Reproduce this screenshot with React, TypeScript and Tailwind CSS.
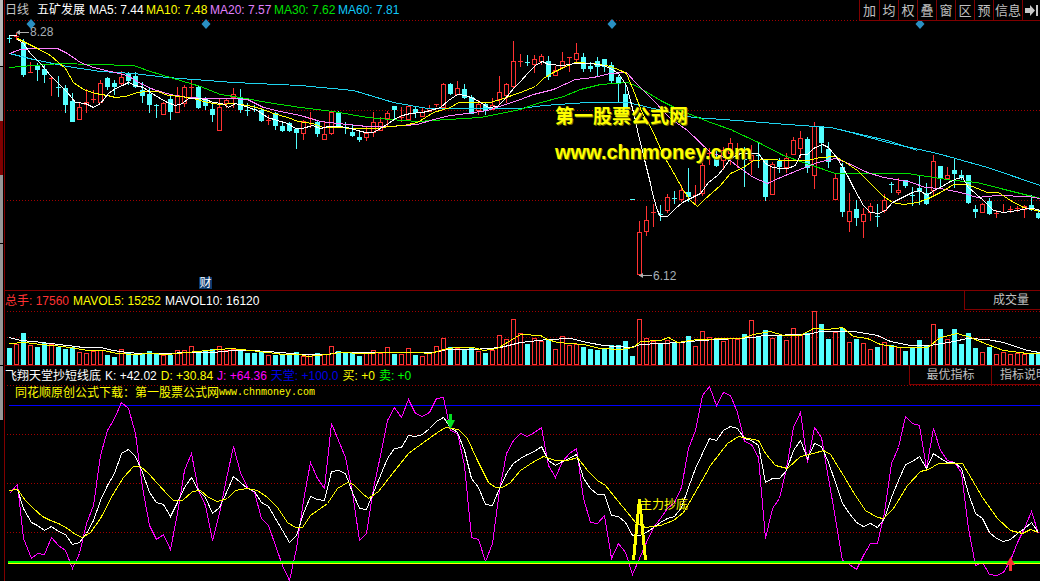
const FONT = "[font-family:'Liberation_Sans','Noto_Sans_CJK_SC',sans-serif]";

// candles: [high, bodyTop, bodyBottom, low, red?], y in 3x units of the reference
type Candle = [number, number, number, number, number];
const CANDLES_A: Candle[] = [
  [105, 115, 115, 130, 0], [100, 108, 108, 120, 1], [118, 125, 225, 232, 0], [185, 216, 218, 220, 1],
  [190, 197, 208, 243, 0], [195, 207, 224, 248, 0], [232, 233, 235, 287, 1], [228, 260, 260, 290, 0],
  [255, 265, 315, 340, 0], [280, 303, 365, 365, 0], [310, 322, 358, 358, 1], [268, 305, 310, 340, 1],
  [270, 298, 298, 310, 1], [240, 250, 308, 310, 1], [230, 234, 262, 270, 0], [240, 248, 260, 285, 0],
  [212, 232, 250, 255, 1], [215, 222, 242, 255, 0], [215, 228, 262, 265, 0], [245, 270, 287, 310, 0],
  [265, 282, 316, 340, 0], [312, 316, 316, 355, 0], [305, 310, 344, 345, 1], [285, 297, 335, 360, 0],
  [262, 284, 334, 335, 1], [255, 262, 310, 320, 1], [240, 260, 260, 290, 1], [255, 262, 325, 328, 0],
  [290, 297, 318, 330, 0], [310, 328, 347, 365, 0], [295, 322, 391, 391, 1], [295, 300, 310, 325, 1],
  [265, 282, 292, 325, 1], [268, 295, 330, 338, 0], [308, 329, 329, 348, 0], [315, 327, 327, 335, 0],
  [325, 330, 363, 365, 0], [345, 359, 359, 375, 1], [335, 340, 378, 390, 0], [365, 378, 393, 395, 0],
  [365, 370, 395, 397, 0], [385, 387, 398, 447, 0], [360, 362, 398, 420, 1], [335, 355, 355, 385, 1],
  [360, 365, 402, 412, 0], [365, 403, 418, 418, 1], [335, 337, 401, 405, 1], [332, 335, 378, 385, 0],
  [365, 380, 380, 402, 0], [375, 397, 410, 412, 0], [395, 412, 420, 425, 0], [380, 398, 410, 422, 1],
  [337, 367, 397, 410, 1], [350, 365, 388, 390, 1], [332, 340, 354, 380, 1], [319, 319, 331, 360, 0],
  [322, 350, 350, 365, 1], [315, 318, 356, 360, 1], [320, 327, 338, 355, 0], [320, 335, 347, 350, 1],
  [315, 323, 333, 335, 1], [312, 313, 313, 322, 1], [250, 252, 322, 325, 1], [250, 252, 282, 284, 0],
  [243, 265, 282, 285, 1], [252, 268, 295, 298, 0], [285, 290, 340, 342, 0], [300, 313, 332, 345, 1],
  [305, 312, 332, 345, 0], [295, 315, 327, 330, 1], [228, 277, 297, 315, 1], [250, 253, 285, 310, 1],
  [123, 184, 260, 265, 1], [162, 184, 184, 200, 1], [165, 185, 185, 198, 0], [165, 178, 194, 220, 1],
  [163, 169, 184, 195, 1], [168, 183, 232, 240, 0], [198, 210, 225, 228, 1], [156, 182, 200, 205, 1],
  [172, 172, 172, 215, 1], [130, 160, 178, 185, 1], [160, 172, 207, 216, 0], [185, 198, 207, 215, 0],
  [170, 183, 200, 230, 0], [177, 177, 200, 215, 0], [185, 195, 243, 248, 0], [225, 232, 254, 308, 0],
  [250, 282, 345, 350, 0],
];
// from candle 89 on, y is measured from y=130 of the reference
const CANDLES_B: Candle[] = [
  [208, 208, 208, 208, 0], [273, 306, 433, 433, 1], [228, 271, 304, 318, 1], [222, 245, 245, 292, 1],
  [225, 252, 252, 272, 0], [192, 202, 242, 250, 1], [183, 204, 204, 222, 0], [165, 180, 206, 215, 1],
  [114, 186, 200, 215, 0], [165, 195, 195, 225, 1], [100, 105, 188, 197, 1], [55, 70, 70, 105, 1],
  [60, 87, 108, 110, 0], [50, 60, 90, 120, 1], [25, 40, 70, 105, 1], [40, 70, 70, 115, 1],
  [50, 87, 87, 172, 0], [45, 75, 90, 135, 1], [35, 75, 75, 115, 0], [88, 88, 202, 213, 0],
  [95, 103, 194, 195, 1], [85, 92, 110, 130, 0], [70, 84, 110, 130, 1], [20, 30, 73, 75, 1],
  [3, 25, 55, 85, 1], [20, 28, 115, 130, 0], [-24, -12, 136, 178, 1], [-12, -12, 40, 68, 0],
  [37, 57, 95, 115, 0], [133, 145, 208, 210, 1], [100, 112, 248, 260, 0], [190, 243, 272, 305, 1],
  [210, 237, 263, 288, 0], [235, 253, 274, 325, 1], [220, 229, 248, 272, 1], [222, 258, 258, 290, 0],
  [193, 210, 240, 250, 1], [155, 163, 163, 188, 0], [143, 181, 187, 195, 1], [150, 150, 167, 173, 0],
  [170, 195, 195, 227, 0], [138, 175, 187, 225, 0], [160, 190, 222, 225, 0], [75, 94, 180, 195, 1],
  [108, 108, 145, 175, 0], [112, 136, 144, 145, 1], [85, 120, 132, 175, 0], [120, 136, 144, 150, 0],
  [135, 135, 220, 222, 0], [225, 237, 245, 263, 0], [220, 222, 245, 247, 1], [205, 212, 252, 255, 0],
  [240, 250, 250, 263, 1], [222, 245, 245, 250, 1], [228, 236, 236, 248, 1], [227, 235, 235, 247, 1],
  [225, 228, 238, 263, 1], [195, 225, 240, 242, 0], [238, 248, 262, 268, 0],
];
const ALL_CANDLES = [...CANDLES_A, ...CANDLES_B];

// volume bars: top y in 3x units from y=270, colour follows the candle
const VOL_TOPS = [234, 222, 190, 225, 232, 220, 222, 230, 237, 232, 247, 250, 242, 240, 255, 261, 236, 247, 252, 250, 244, 250, 256, 254, 240, 240, 229, 243, 243, 238, 229, 241, 237, 238, 248, 248, 243, 255, 255, 254, 252, 247, 258, 251, 250, 253, 229, 243, 246, 250, 258, 247, 241, 250, 232, 251, 252, 235, 255, 259, 250, 229, 205, 232, 233, 236, 235, 243, 249, 240, 196, 208, 148, 190, 222, 205, 212, 208, 238, 199, 226, 222, 230, 237, 240, 236, 226, 226, 213, 258, 148, 205, 214, 220, 211, 219, 217, 198, 229, 184, 202, 210, 213, 205, 206, 192, 151, 197, 180, 203, 194, 211, 175, 191, 190, 124, 162, 207, 186, 174, 217, 207, 220, 238, 231, 217, 226, 232, 243, 233, 210, 224, 163, 177, 207, 177, 222, 190, 234, 247, 231, 253, 247, 253, 250, 252, 251, 247];

const ma5 = [[50, 118], [70, 130], [90, 160], [120, 190], [150, 225], [175, 250], [200, 275], [225, 305], [255, 308], [280, 322], [300, 310], [325, 280], [345, 265], [365, 255], [385, 247], [405, 255], [430, 262], [450, 275], [475, 290], [500, 305], [525, 315], [545, 310], [565, 295], [590, 295], [615, 298], [640, 305], [665, 310], [685, 322], [705, 310], [725, 315], [745, 320], [770, 330], [800, 350], [830, 360], [860, 370], [885, 385], [905, 385], [935, 375], [960, 385], [985, 378], [1010, 378], [1040, 380], [1070, 390], [1095, 395], [1120, 395], [1140, 385], [1165, 370], [1185, 355], [1205, 345], [1230, 338], [1265, 335], [1290, 330], [1320, 320], [1345, 300], [1370, 283], [1395, 285], [1420, 295], [1440, 305], [1465, 320], [1490, 318], [1515, 295], [1540, 265], [1560, 243], [1580, 220], [1605, 195], [1625, 183], [1645, 193], [1687, 195], [1725, 190], [1770, 190], [1810, 195], [1830, 205], [1855, 220], [1878, 255], [1890, 300], [1905, 360], [1910, 390]];
const ma5b = [[350, 0], [375, 100], [390, 160], [400, 200], [412, 240], [420, 257], [440, 257], [465, 235], [485, 215], [510, 205], [540, 190], [565, 155], [590, 135], [610, 115], [630, 85], [660, 70], [695, 68], [715, 70], [735, 100], [755, 112], [780, 115], [800, 115], [825, 105], [840, 72], [860, 72], [880, 55], [905, 42], [925, 50], [950, 85], [985, 140], [1000, 170], [1030, 225], [1050, 245], [1075, 250], [1095, 240], [1115, 215], [1140, 205], [1175, 185], [1198, 180], [1222, 195], [1240, 180], [1260, 170], [1285, 155], [1310, 145], [1325, 142], [1345, 170], [1390, 210], [1420, 240], [1450, 245], [1490, 240], [1520, 235], [1540, 235], [1560, 240]];
const ma10 = [[50, 115], [80, 128], [110, 145], [150, 165], [175, 185], [195, 205], [220, 245], [250, 268], [285, 278], [320, 285], [345, 290], [375, 288], [410, 277], [440, 272], [470, 272], [505, 285], [540, 287], [580, 295], [620, 305], [660, 312], [700, 310], [740, 315], [780, 325], [820, 340], [860, 350], [895, 362], [935, 370], [970, 380], [1010, 380], [1060, 385], [1130, 385], [1165, 378], [1210, 374], [1250, 365], [1300, 335], [1350, 322], [1375, 307], [1420, 307], [1470, 305], [1510, 295], [1560, 277], [1605, 258], [1630, 235], [1660, 215], [1690, 200], [1725, 187], [1780, 188], [1830, 198], [1860, 210], [1878, 218], [1900, 270], [1925, 340], [1955, 390]];
const ma10b = [[395, 0], [430, 75], [460, 125], [490, 180], [510, 210], [530, 227], [550, 210], [575, 185], [600, 165], [630, 130], [670, 110], [700, 90], [740, 88], [800, 90], [860, 90], [900, 80], [945, 78], [975, 95], [1010, 120], [1050, 160], [1085, 195], [1115, 215], [1150, 223], [1190, 215], [1225, 205], [1260, 185], [1300, 163], [1340, 163], [1400, 185], [1435, 185], [1470, 210], [1510, 230], [1560, 242]];
const ma20 = [[28, 160], [60, 147], [100, 145], [170, 145], [200, 160], [240, 185], [280, 200], [330, 212], [380, 225], [420, 250], [460, 268], [510, 283], [560, 290], [620, 293], [680, 293], [740, 298], [790, 320], [840, 332], [900, 345], [960, 362], [1040, 372], [1100, 378], [1170, 378], [1250, 372], [1300, 358], [1350, 345], [1400, 338], [1460, 330], [1560, 297], [1600, 283], [1660, 268], [1725, 238], [1780, 232], [1830, 220], [1878, 215], [1905, 245], [1960, 300], [2010, 355], [2060, 390]];
const ma20b = [[500, 0], [570, 65], [620, 85], [660, 115], [700, 140], [740, 158], [780, 140], [830, 120], [890, 95], [945, 85], [985, 100], [1040, 125], [1090, 142], [1165, 152], [1215, 170], [1260, 175], [1320, 185], [1370, 200], [1430, 195], [1520, 197], [1560, 205]];
const ma30 = [[28, 202], [100, 195], [180, 188], [280, 192], [400, 194], [450, 212], [520, 235], [600, 258], [660, 282], [720, 290], [800, 305], [900, 320], [1000, 333], [1100, 350], [1170, 358], [1250, 362], [1340, 357], [1440, 350], [1560, 327], [1610, 310], [1690, 288], [1740, 268], [1800, 252], [1880, 245], [1910, 258], [1980, 300], [2040, 330], [2130, 365], [2200, 390]];
const ma30b = [[635, 0], [715, 35], [790, 75], [850, 95], [945, 130], [1160, 130], [1300, 150], [1370, 155], [1440, 175], [1500, 190], [1560, 205]];
const ma60 = [[28, 160], [100, 178], [200, 198], [300, 212], [400, 218], [500, 230], [700, 245], [900, 255], [1060, 270], [1180, 305], [1280, 325], [1440, 325], [1560, 325], [1630, 315], [1760, 305], [1880, 305], [1960, 325], [2080, 352], [2210, 360], [2360, 372], [2490, 380], [2660, 420], [2750, 450]];
const ma60b = [[970, 0], [1100, 35], [1250, 70], [1400, 110], [1560, 165]];

const vol10 = [[28, 202], [60, 210], [100, 213], [150, 220], [200, 225], [250, 230], [300, 232], [340, 240], [380, 247], [420, 250], [500, 250], [560, 247], [640, 245], [700, 240], [760, 240], [840, 245], [900, 252], [980, 252], [1010, 245], [1100, 247], [1220, 245], [1300, 247], [1340, 237], [1420, 238], [1500, 232], [1560, 217], [1640, 207], [1710, 205], [1760, 215], [1810, 225], [1890, 232], [1920, 223], [1980, 220], [2040, 215], [2100, 210], [2210, 205], [2260, 200], [2290, 195], [2420, 193], [2460, 183], [2560, 183], [2630, 195], [2670, 212], [2730, 225], [2790, 225], [2860, 212], [2900, 205], [2960, 206], [3010, 217], [3080, 240], [3120, 245]];
const vol5 = [[28, 218], [75, 217], [120, 222], [160, 225], [210, 232], [260, 240], [310, 240], [350, 248], [400, 253], [450, 250], [500, 252], [560, 245], [620, 241], [690, 235], [750, 240], [800, 245], [850, 253], [900, 253], [920, 258], [980, 252], [1020, 246], [1090, 248], [1160, 245], [1250, 245], [1290, 250], [1340, 235], [1370, 230], [1420, 230], [1450, 240], [1490, 235], [1530, 210], [1560, 192], [1620, 196], [1640, 207], [1670, 215], [1750, 222], [1800, 235], [1860, 236], [1900, 230], [1920, 213], [1980, 210], [2005, 200], [2030, 215], [2090, 207], [2190, 204], [2220, 205], [2260, 192], [2310, 184], [2350, 195], [2400, 195], [2440, 175], [2480, 176], [2525, 170], [2560, 198], [2600, 205], [2640, 222], [2700, 232], [2780, 230], [2820, 200], [2870, 190], [2910, 200], [2960, 222], [3010, 240], [3080, 248], [3120, 250]];

const kJ = [[28, 325], [50, 298], [70, 460], [92, 520], [112, 505], [133, 508], [154, 455], [175, 480], [196, 495], [217, 548], [238, 505], [259, 415], [280, 360], [301, 210], [322, 135], [343, 100], [364, 52], [385, 70], [406, 145], [427, 305], [448, 420], [469, 463], [490, 448], [511, 493], [532, 385], [553, 255], [574, 203], [595, 315], [616, 360], [637, 465], [658, 385], [679, 280], [700, 182], [721, 260], [742, 305], [763, 320], [784, 400], [805, 420], [826, 480], [847, 540], [868, 585], [889, 490], [910, 345], [931, 230], [952, 280], [973, 310], [994, 113], [1015, 165], [1036, 215], [1057, 320], [1078, 465], [1099, 445], [1120, 310], [1141, 210], [1162, 105], [1183, 65], [1204, 97], [1225, 42], [1246, 85], [1267, 92], [1288, 80], [1309, 40], [1330, 35], [1351, 135], [1372, 145], [1393, 240], [1414, 455], [1435, 462], [1456, 527], [1477, 475], [1498, 315], [1519, 205], [1540, 165], [1560, 145], [1581, 152], [1602, 142], [1623, 125], [1644, 240], [1665, 275], [1686, 228], [1707, 205], [1728, 190], [1749, 340], [1770, 410], [1791, 415], [1812, 390], [1833, 518], [1854, 475], [1875, 500], [1896, 568], [1917, 520], [1938, 470], [1959, 425], [1980, 400], [2001, 370], [2022, 350], [2043, 305], [2064, 190], [2085, 135], [2106, 30], [2127, 3], [2148, 60], [2169, 20], [2190, 30], [2211, 80], [2232, 168], [2253, 178], [2274, 215], [2295, 458], [2316, 370], [2337, 340], [2358, 250], [2379, 125], [2400, 80], [2421, 230], [2442, 125], [2463, 155], [2484, 280], [2505, 400], [2526, 525], [2547, 538], [2568, 552], [2589, 510], [2610, 473], [2631, 475], [2652, 380], [2673, 235], [2694, 185], [2715, 92], [2736, 115], [2757, 120], [2778, 250], [2799, 130], [2820, 195], [2841, 225], [2862, 230], [2883, 260], [2904, 430], [2925, 540], [2946, 530], [2967, 568], [2988, 570], [3009, 560], [3030, 525], [3051, 470], [3072, 430], [3093, 378], [3114, 445]];
const kK = [[28, 315], [50, 312], [70, 370], [92, 410], [112, 420], [133, 435], [154, 422], [175, 438], [196, 448], [217, 478], [238, 470], [259, 445], [280, 405], [301, 345], [322, 300], [343, 265], [364, 205], [385, 193], [406, 212], [427, 260], [448, 320], [469, 350], [490, 358], [511, 393], [532, 350], [553, 305], [574, 277], [595, 315], [616, 335], [637, 385], [658, 365], [679, 320], [700, 272], [721, 290], [742, 308], [763, 318], [784, 350], [805, 362], [826, 400], [847, 435], [868, 472], [889, 450], [910, 385], [931, 333], [952, 343], [973, 346], [994, 258], [1015, 256], [1036, 265], [1057, 320], [1078, 370], [1099, 373], [1120, 320], [1141, 270], [1162, 220], [1183, 190], [1204, 185], [1225, 150], [1246, 153], [1267, 148], [1288, 130], [1309, 108], [1330, 97], [1351, 125], [1372, 140], [1393, 195], [1414, 280], [1435, 305], [1456, 358], [1477, 360], [1498, 310], [1519, 265], [1540, 235], [1560, 220], [1581, 208], [1602, 197], [1623, 183], [1644, 225], [1665, 240], [1686, 228], [1707, 218], [1728, 208], [1749, 280], [1770, 310], [1791, 328], [1812, 328], [1833, 390], [1854, 392], [1875, 412], [1896, 450], [1917, 450], [1938, 440], [1959, 425], [1980, 412], [2001, 400], [2022, 392], [2043, 365], [2064, 305], [2085, 250], [2106, 205], [2127, 160], [2148, 165], [2169, 135], [2190, 122], [2211, 130], [2232, 160], [2253, 165], [2274, 180], [2295, 292], [2316, 280], [2337, 280], [2358, 255], [2379, 195], [2400, 165], [2421, 220], [2442, 175], [2463, 182], [2484, 232], [2505, 290], [2526, 355], [2547, 385], [2568, 412], [2589, 422], [2610, 415], [2631, 425], [2652, 400], [2673, 335], [2694, 285], [2715, 238], [2736, 228], [2757, 213], [2778, 250], [2799, 203], [2820, 218], [2841, 230], [2862, 232], [2883, 250], [2904, 325], [2925, 385], [2946, 400], [2967, 440], [2988, 460], [3009, 467], [3030, 462], [3051, 445], [3072, 428], [3093, 410], [3114, 440]];
const kD = [[28, 315], [50, 312], [75, 345], [100, 370], [125, 392], [150, 405], [175, 415], [200, 428], [225, 447], [245, 455], [270, 440], [300, 400], [340, 325], [370, 275], [400, 243], [420, 242], [445, 265], [470, 295], [500, 328], [520, 345], [545, 345], [575, 318], [600, 315], [625, 335], [650, 348], [680, 340], [705, 315], [740, 310], [770, 315], [800, 335], [830, 365], [860, 410], [885, 425], [905, 425], [930, 390], [960, 370], [980, 355], [1010, 310], [1040, 290], [1060, 298], [1085, 325], [1105, 338], [1135, 318], [1175, 265], [1225, 205], [1270, 170], [1310, 140], [1335, 127], [1375, 133], [1400, 160], [1430, 225], [1465, 290], [1485, 305], [1505, 307], [1530, 290], [1560, 255], [1595, 230], [1630, 213], [1665, 225], [1700, 225], [1730, 215], [1760, 255], [1790, 285], [1815, 300], [1850, 345], [1880, 380], [1905, 410], [1935, 425], [1980, 420], [2020, 405], [2050, 380], [2080, 330], [2130, 240], [2180, 175], [2215, 153], [2275, 165], [2295, 205], [2325, 240], [2360, 250], [2400, 212], [2440, 205], [2470, 195], [2490, 208], [2530, 270], [2565, 330], [2595, 375], [2630, 395], [2650, 400], [2680, 370], [2720, 300], [2760, 258], [2785, 252], [2815, 235], [2885, 235], [2905, 265], [2945, 335], [2990, 400], [3030, 435], [3065, 443], [3090, 432], [3114, 440]];

// snap to pixel centres so the 1px lines stay thin
const pts = (list: number[][], dx: number, dy: number) =>
  list.map((p) => `${Math.round(dx + p[0] / 3) + 0.5},${Math.round(dy + p[1] / 3) + 0.5}`).join(" ");

function Line({ list, dx = 0, dy = 0, color }: { list: number[][]; dx?: number; dy?: number; color: string }) {
  return <polyline points={pts(list, dx, dy)} fill="none" stroke={color} strokeWidth="1" shapeRendering="crispEdges" />;
}

function Dots({ y }: { y: number }) {
  return <line x1="7" x2="1040" y1={y + 0.5} y2={y + 0.5} stroke="#a00000" strokeDasharray="1 2" shapeRendering="crispEdges" />;
}

function Diamond({ x }: { x: number }) {
  return <polygon points={`${x},19 ${x + 4.5},24 ${x},29 ${x - 4.5},24`} fill="#2a8fc2" />;
}

function CandleBar({ c, i, dy }: { c: Candle; i: number; dy: number }) {
  const [hi, top, bot, lo, red] = c;
  const x = 7 + 7 * i;
  const color = red ? "#ff3232" : "#54ffff";
  const yTop = Math.round(dy + top / 3);
  const h = Math.round((bot - top) / 3);
  return (
    <g shapeRendering="crispEdges">
      <line x1={x + 2.5} x2={x + 2.5} y1={dy + hi / 3} y2={dy + lo / 3} stroke={color} />
      {h <= 1 ? (
        <rect x={x} y={yTop} width="5" height="1" fill={color} />
      ) : red ? (
        <rect x={x + 0.5} y={yTop + 0.5} width="4" height={h} fill="#000" stroke={color} />
      ) : (
        <rect x={x} y={yTop} width="5" height={h} fill={color} />
      )}
    </g>
  );
}

function MainChart() {
  return (
    <svg className="block w-[1035px] h-[290px]" viewBox="5 0 1035 290">
      <Dots y={20} />
      <Dots y={110} />
      <Dots y={200} />
      {[31, 206, 612, 920].map((x) => (
        <Diamond key={x} x={x} />
      ))}
      {CANDLES_A.map((c, i) => (
        <CandleBar key={i} c={c} i={i} dy={0} />
      ))}
      {CANDLES_B.map((c, i) => (
        <CandleBar key={i} c={c} i={i + 89} dy={130} />
      ))}
      <Line list={ma60} color="#1fd4f0" />
      <Line list={ma60b} dx={520} dy={130} color="#1fd4f0" />
      <Line list={ma30} color="#00e000" />
      <Line list={ma30b} dx={520} dy={130} color="#00e000" />
      <Line list={ma20} color="#ff80ff" />
      <Line list={ma20b} dx={520} dy={130} color="#ff80ff" />
      <Line list={ma10} color="#ffff00" />
      <Line list={ma10b} dx={520} dy={130} color="#ffff00" />
      <Line list={ma5} color="#ffffff" />
      <Line list={ma5b} dx={520} dy={130} color="#ffffff" />
      {/* high and low price markers */}
      <g stroke="#b0b0b0" shapeRendering="crispEdges">
        <line x1="17" x2="29" y1="32.5" y2="32.5" />
        <line x1="639" x2="652" y1="275.5" y2="275.5" />
      </g>
      <rect x="9" y="35" width="8" height="1" fill="#ffffff" />
      <polygon points="16,32.5 20,30 20,35" fill="#b0b0b0" />
      <polygon points="639,275.5 643,273 643,278" fill="#b0b0b0" />
    </svg>
  );
}

function VolumeChart() {
  return (
    <svg className="block w-[1035px] h-[74px]" viewBox="5 291 1035 74">
      <Dots y={311} />
      <Dots y={337} />
      {VOL_TOPS.map((t, i) => {
        const x = 7 + 7 * i;
        const y = Math.round(270 + t / 3);
        return ALL_CANDLES[i][4] ? (
          <rect key={i} x={x + 0.5} y={y + 0.5} width="4" height={364 - y} fill="#000" stroke="#ff3232" shapeRendering="crispEdges" />
        ) : (
          <rect key={i} x={x} y={y} width="5" height={365 - y} fill="#54ffff" shapeRendering="crispEdges" />
        );
      })}
      <Line list={vol10} dy={270} color="#ffffff" />
      <Line list={vol5} dy={270} color="#ffff00" />
    </svg>
  );
}

function KdjChart() {
  return (
    <svg className="block w-[1035px] h-[215px]" viewBox="5 366 1035 215">
      <Dots y={385} />
      <Dots y={434} />
      <Dots y={483} />
      <Dots y={532} />
      <rect x="9" y="405" width="1031" height="1" fill="#0000ff" />
      <Line list={kJ} dy={385} color="#ff00ff" />
      <Line list={kK} dy={385} color="#ffffff" />
      <Line list={kD} dy={385} color="#ffff00" />
      <rect x="8" y="561" width="1032" height="2" fill="#00ff00" />
      <rect x="8" y="563" width="1032" height="1" fill="#ffff00" />
      <polyline points="633.5,560 639.5,499 645.5,560" fill="none" stroke="#ffff00" strokeWidth="3" shapeRendering="crispEdges" />
      {/* sell and buy arrows */}
      <polygon points="449,414 452,414 452,420 455,420 450.5,429 446,420 449,420" fill="#00e020" />
      <polygon points="1010.5,557 1015,565 1012,565 1012,571 1009,571 1009,565 1006,565" fill="#ff3232" />
    </svg>
  );
}

function ToolButton({ label, width }: { label: string; width: string }) {
  return (
    <div className={`${width} flex items-center justify-center border-l border-[#800000] text-[13px] text-[#c0c0c0]`}>{label}</div>
  );
}

export default function App() {
  return (
    <div className={`${FONT} flex w-[1040px] h-[581px] overflow-hidden bg-black text-xs leading-none`}>
      {/* left scroll strip */}
      <div className="w-[5px] h-full shrink-0 border-r border-[#800000] flex flex-col">
        <div className="w-[3px] h-[66px] bg-[#b8b8b8]" />
        <div className="w-[3px] h-[54px] mt-px bg-[#969696]" />
        <div className="w-[3px] h-[54px] bg-[#800000]" />
        <div className="w-[3px] h-[68px] bg-[#969696]" />
        <div className="w-[3px] h-[121px] mt-px bg-[#969696]" />
        <div className="w-[3px] h-[54px] mt-px bg-[#969696]" />
      </div>

      <div className="flex-1 flex flex-col min-w-0">
        <div className="relative h-[291px] border-b border-[#800000]">
          <MainChart />
          <div className="absolute left-0 top-0 h-5 flex items-center whitespace-nowrap">
            <span className="text-[#c4c4c4] w-[32px]">日线</span>
            <span className="text-white w-[52px]">五矿发展</span>
            <span className="text-white w-[57px]">MA5: 7.44</span>
            <span className="text-[#ffff00] w-[64px]">MA10: 7.48</span>
            <span className="text-[#e080ff] w-[64px]">MA20: 7.57</span>
            <span className="text-[#00e000] w-[64px]">MA30: 7.62</span>
            <span className="text-[#10c8f8]">MA60: 7.81</span>
          </div>
          <div className="absolute right-0 top-0 h-[21px] flex border-b border-[#800000] bg-black">
            <ToolButton label="加" width="w-[20px]" />
            <ToolButton label="均" width="w-[19px]" />
            <ToolButton label="权" width="w-[19px]" />
            <ToolButton label="叠" width="w-[19px]" />
            <ToolButton label="窗" width="w-[19px]" />
            <ToolButton label="区" width="w-[19px]" />
            <ToolButton label="预" width="w-[19px]" />
            <ToolButton label="信息" width="w-[29px]" />
            <div className="w-[18px] flex items-center justify-center border-l border-[#800000]">
              <svg width="13" height="11" viewBox="0 0 13 11">
                <polygon points="0,3 5,3 5,0 10,5.5 5,11 5,8 0,8" fill="#c8c8c8" />
                <rect x="11" y="0" width="2" height="11" fill="#c8c8c8" />
              </svg>
            </div>
          </div>
          <span className="absolute left-[25px] top-[26px] text-[#a8b0b8]">8.28</span>
          <span className="absolute left-[648px] top-[270px] text-[#a8b0b8]">6.12</span>
          <span className="absolute left-[194px] top-[277px] w-[13px] h-[12px] bg-[#0b3a6e] text-white flex items-center justify-center">财</span>
          <div className="absolute left-[550px] top-[106px] text-[19px] font-bold leading-[22px] text-[#ffff00] [text-shadow:1px_1px_0_#707000]">第一股票公式网</div>
          <div className="absolute left-[550px] top-[141px] text-[20px] font-bold leading-[22px] text-[#ffff00] [text-shadow:1px_1px_0_#707000]">www.chnmoney.com</div>
        </div>

        <div className="relative h-[75px] border-b border-[#800000]">
          <VolumeChart />
          <div className="absolute left-0 top-0 h-[19px] flex items-center gap-1 whitespace-nowrap">
            <span className="text-[#ff3232]">总手: 17560</span>
            <span className="text-[#ffff00]">MAVOL5: 15252</span>
            <span className="text-white">MAVOL10: 16120</span>
          </div>
          <div className="absolute right-0 top-0 w-[76px] h-[19px] pl-[28px] flex items-center border-l border-b border-[#800000] bg-black text-[#c0c0c0]">成交量</div>
        </div>

        <div className="relative flex-1">
          <KdjChart />
          <div className="absolute left-0 top-0 h-[19px] flex items-center gap-1 whitespace-nowrap">
            <span className="text-white">飞翔天堂抄短线底</span>
            <span className="text-white">K: +42.02</span>
            <span className="text-[#ffff00]">D: +30.84</span>
            <span className="text-[#ff00ff]">J: +64.36</span>
            <span className="text-[#0000e6]">天堂: +100.0</span>
            <span className="text-[#ffff00]">买: +0</span>
            <span className="text-[#00ff00]">卖: +0</span>
          </div>
          <div className="absolute right-0 top-0 h-[19px] flex border-b border-[#800000] bg-black text-[#c0c0c0]">
            <div className="w-[82px] flex items-center justify-center border-l border-[#800000]">最优指标</div>
            <div className="w-[49px] pl-[8px] flex items-center overflow-hidden whitespace-nowrap border-l border-[#800000]">指标说明</div>
          </div>
          <div className="absolute left-[10px] top-[21px] flex items-center whitespace-nowrap text-[#ffff00]">
            <span>同花顺原创公式下载：第一股票公式网</span>
            <span className="font-['Liberation_Mono'] text-[10px]">www.chnmoney.com</span>
          </div>
          <span className="absolute left-[635px] top-[133px] text-[#ffff00]">主力抄底</span>
        </div>
      </div>
    </div>
  );
}
